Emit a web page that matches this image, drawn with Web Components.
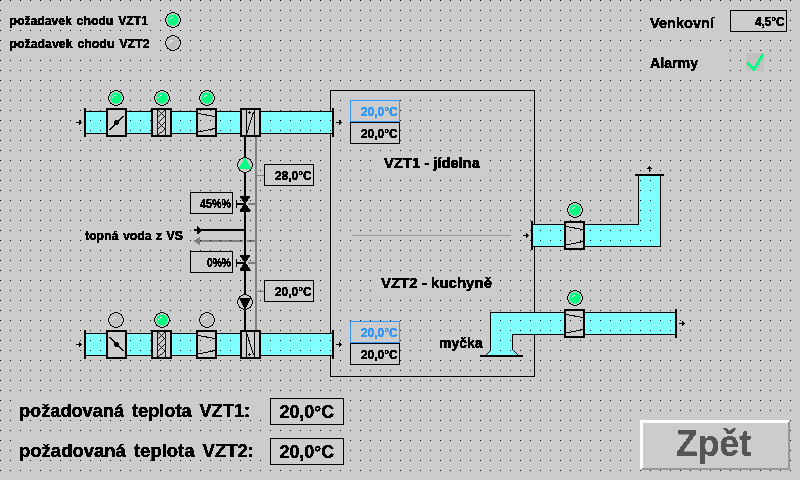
<!DOCTYPE html>
<html lang="cs">
<head>
<meta charset="utf-8">
<title>VZT</title>
<style>
html,body{margin:0;padding:0;background:#ccc}
body{width:800px;height:480px;overflow:hidden;font-family:"Liberation Sans",Arial,sans-serif}
</style>
</head>
<body>
<hmi-screen></hmi-screen>
<script>
// Base for items on the free canvas: x / y / w / h attributes set the box.
class HmiItem extends HTMLElement {
  num(n, d = 0) { return this.hasAttribute(n) ? +this.getAttribute(n) : d; }
  size() { return [this.num('w', 20), this.num('h', 20)]; }
  connectedCallback() {
    if (this.shadowRoot) return;
    const [w, h] = this.size();
    this.attachShadow({ mode: 'open' }).innerHTML =
      `<style>:host{position:absolute;display:block;left:${this.num('x')}px;top:${this.num('y')}px;width:${w}px;height:${h}px;box-sizing:border-box}
       svg{display:block;overflow:visible;shape-rendering:crispEdges}
       text{font-family:"Liberation Sans",Arial,sans-serif;font-weight:bold;white-space:pre}</style>` + this.view(w, h);
  }
}
const CRISP = `<filter id="crisp" x="-10%" y="-30%" width="120%" height="160%" color-interpolation-filters="sRGB"><feComponentTransfer><feFuncA type="linear" slope="12" intercept="-5"/></feComponentTransfer></filter>`;
const words = (t, x, y, len, size, color = '#000', gap = 0) =>
  `<text x="${x}" y="${y}" textLength="${len}" lengthAdjust="spacingAndGlyphs" font-size="${size}" fill="${color}" stroke="${color}" stroke-width="${size < 20 ? 0.35 : 0.2}" style="word-spacing:${gap}px" filter="url(#crisp)">${t}</text>`;

// Caption with an opaque plate; tx / base / len / size place the words.
customElements.define('hmi-label', class extends HmiItem {
  view(w, h) {
    return `<style>:host{background:#ccc}</style><svg width="${w}" height="${h}">${CRISP}${words(this.getAttribute('text'), this.num('tx') - this.num('x'), this.num('base') - this.num('y'), this.num('len'), this.num('size'), '#000', this.num('gap'))}</svg>`;
  }
});
// Framed numeric reading
customElements.define('hmi-value', class extends HmiItem {
  size() { return [this.num('w', 50), this.num('h', 22)]; }
  view(w, h) {
    const c = this.getAttribute('color') || '#000', len = this.num('len', 36.5);
    return `<svg width="${w}" height="${h}">${CRISP}<rect x=".5" y=".5" width="${w - 1}" height="${h - 1}" fill="#ccc" stroke="${c}"/>${words(this.getAttribute('text'), w - this.num('pad', 2.5) - len, this.num('base', 16), len, this.num('size', 12.5), c)}</svg>`;
  }
});
customElements.define('hmi-lamp', class extends HmiItem {
  size() { return [16, 16]; }
  view() {
    const on = this.hasAttribute('on');
    return `<svg width="16" height="16"><circle cx="8" cy="8" r="7.4" fill="#ccc" stroke="#000" stroke-width="1.1"/>
      <circle cx="8" cy="8" r="5.9" fill="${on ? '#00ff80' : '#c0c0c0'}" stroke="${on ? '#b8c8be' : '#c8c8c8'}" stroke-width=".6"/>
      <path d="M4 7.5h1M5 6.5h1M6 5.5h2" stroke="#fff"/></svg>`;
  }
});
customElements.define('hmi-arrow', class extends HmiItem {
  size() { return [6, 5]; }
  view() {
    return `<svg width="6" height="5"><g ${this.hasAttribute('up') ? 'transform="rotate(-90) translate(-6 0)"' : ''}><path d="M0 2h6v1H0zM3 0h1v5H3zM4 1h1v3H4z"/></g></svg>`;
  }
});
// Air-handling unit sections, all in the same 21 x 29 casing
class HmiUnit extends HmiItem {
  size() { return [21, 29]; }
  view() {
    return `<svg width="21" height="29"><rect x="1" y="1" width="19" height="27" fill="#ccc" stroke="#000" stroke-width="2"/>${this.inside()}</svg>`;
  }
}
customElements.define('hmi-damper', class extends HmiUnit {
  inside() {
    const closed = this.hasAttribute('closed');
    return `<g ${closed ? 'transform="matrix(1 0 0 -1 0 29)"' : ''}><path d="M3.5 22 17.5 8" stroke="#000" stroke-width="1.3"/><path d="M8 13h1v-1h3v1h1v3h-1v1H9v-1H8z"/></g>`;
  }
});
customElements.define('hmi-filter', class extends HmiUnit {
  inside() { return `<path d="M6.5 2V27M14.5 2V27M7 2.5 14 8.5 7 14.5 14 21 7 27M14 2.5 7 8.5M7 21 14 14.5" fill="none" stroke="#000" stroke-width=".9"/>`; }
});
customElements.define('hmi-fan', class extends HmiUnit {
  inside() { return `<path d="M2 5.5 19 8.5M2 24 19 20.5" stroke="#000"/>`; }
});
customElements.define('hmi-coil', class extends HmiUnit {
  inside() {
    return `<g ${this.hasAttribute('flip') ? 'transform="matrix(1 0 0 -1 0 29)"' : ''}><path d="M6.5 2V27M14.5 2V27M6.5 26.5 13.5 4M8 4.5h3M9.5 3v3" fill="none" stroke="#000"/></g>`;
  }
});
customElements.define('hmi-pump', class extends HmiItem {
  size() { return [16, 16]; }
  view() {
    return `<svg width="16" height="16"><circle cx="8" cy="8" r="7.4" fill="#ccc" stroke="#000"/>${this.hasAttribute('on')
      ? '<path d="M8 0.5 14.5 12H1.5z" fill="#00ff80"/>' : '<path d="M8 15.5 14 4H2z"/>'}</svg>`;
  }
});
customElements.define('hmi-valve', class extends HmiItem {
  size() { return [20, 16]; }
  view() {
    return `<svg width="20" height="16"><path d="M12 7h8v2h-8z" fill="#808080"/><path d="M4 0h10v2h-1v1h-1v2h-1v1h-1v3h1v1h1v2h1v1h1v3H4v-3h1v-1h1v-2h1V9H1v3H0V4h1v3h7V6H7V5H6V3H5V2H4z"/></svg>`;
  }
});
// Ducts, room outline, water pipes, in screen coordinates
customElements.define('hmi-ducts', class extends HmiItem {
  view(w, h) {
    const main = y => `<rect x="86" y="${y}" width="246" height="23" fill="#80ffff"/><path d="M86 ${y + .5}H332M86 ${y + 22.5}H332" stroke="#000"/><path d="M85 ${y - 3}v29M333 ${y - 3}v29" stroke="#000" stroke-width="2"/>`;
    return `<svg width="${w}" height="${h}" fill="none" stroke="none">
      <rect x="330.5" y="90.5" width="204" height="286" stroke="#000"/>
      <path d="M352 235.5H511" stroke="#999"/>
      ${main(111)}${main(333)}
      <path d="M533 224.5H638.5V176H660.5V246.5H533z" fill="#80ffff"/>
      <path d="M533 224.5H638.5V176M660.5 176V246.5H533" stroke="#000"/>
      <path d="M532 221v29M635 175h29" stroke="#000" stroke-width="2"/>
      <path d="M675 312.5H490.5V350.5L485.5 355.5H518.5L512.5 349.5V334.5H675z" fill="#80ffff"/>
      <path d="M675 312.5H490.5V350.5L485.5 355.5M518.5 355.5 512.5 349.5V334.5H675" stroke="#000"/>
      <path d="M676 309v29M480 356h43" stroke="#000" stroke-width="2"/>
      <path d="M256 137V330M194 241H256" stroke="#808080" stroke-width="2"/>
      <path d="M257 175.5h7M257 291.5h7" stroke="#808080"/>
      <path d="M243 239h4v4h-4z" fill="#ccc"/>
      <path d="M245 137V330M194 230H245" stroke="#000" stroke-width="2"/>
      <path d="M197 226h1v1h1v1h1v1h1v1h1v1h-1v1h-1v1h-1v1h-2z" fill="#000"/>
      <path d="M200 237h-1v1h-2v1h-1v1h-2v2h2v1h1v1h2v1h1z" fill="#808080"/>
    </svg>`;
  }
});
customElements.define('hmi-dots', class extends HmiItem {
  view(w, h) { return `<svg width="${w}" height="${h}"><pattern id="grid" width="10" height="10" patternUnits="userSpaceOnUse"><rect width="1" height="1"/></pattern><rect width="${w}" height="${h}" fill="url(#grid)"/></svg>`; }
});
customElements.define('hmi-check', class extends HmiItem {
  size() { return [18, 18]; }
  view() { return `<svg width="18" height="18"><rect width="18" height="18" fill="#c0c0c0"/><path d="M1 10 8 16.5 17 1.5" fill="none" stroke="#00ff80" stroke-width="2.8"/></svg>`; }
});
customElements.define('hmi-button', class extends HmiItem {
  view(w, h) {
    return `<svg width="${w}" height="${h}">${CRISP}<rect width="${w}" height="${h}" fill="#999"/><path d="M0 0H${w}L${w - 2} 2V${h - 2}H2L0 ${h}z" fill="#fff"/><rect x="3" y="3" width="${w - 5}" height="${h - 5}" fill="#ccc"/>${words(this.getAttribute('text'), 36, 36, 75, 36, '#555')}</svg>`;
  }
});
customElements.define('hmi-screen', class extends HTMLElement {
  constructor() {
    super();
    const line = (y, a, b) => `<hmi-damper x="106" y="${y}" ${a}></hmi-damper><hmi-filter x="151" y="${y}"></hmi-filter><hmi-coil x="240" y="${y}" ${b}></hmi-coil>`;
    this.attachShadow({ mode: 'open' }).innerHTML = `
<style>:host{position:relative;display:block;width:800px;height:480px;background:#ccc;overflow:hidden}</style>
<hmi-ducts w="800" h="480"></hmi-ducts>
<hmi-fan x="196" y="108"></hmi-fan><hmi-fan x="196" y="330"></hmi-fan>
<hmi-fan x="564" y="221"></hmi-fan><hmi-fan x="564" y="309"></hmi-fan>
<hmi-dots w="800" h="480"></hmi-dots>
${line(108, '', '')}${line(330, 'closed', 'flip')}
<hmi-arrow x="76" y="120"></hmi-arrow><hmi-arrow x="336" y="120"></hmi-arrow>
<hmi-arrow x="76" y="342"></hmi-arrow><hmi-arrow x="336" y="342"></hmi-arrow>
<hmi-arrow x="523" y="233"></hmi-arrow><hmi-arrow x="679" y="321"></hmi-arrow>
<hmi-arrow x="647" y="166" up></hmi-arrow>
<hmi-lamp x="165" y="12" on></hmi-lamp><hmi-lamp x="165" y="35"></hmi-lamp>
<hmi-lamp x="108" y="90" on></hmi-lamp><hmi-lamp x="154" y="90" on></hmi-lamp><hmi-lamp x="199" y="90" on></hmi-lamp>
<hmi-lamp x="108" y="312"></hmi-lamp><hmi-lamp x="154" y="312" on></hmi-lamp><hmi-lamp x="199" y="312"></hmi-lamp>
<hmi-lamp x="567" y="202" on></hmi-lamp><hmi-lamp x="567" y="290" on></hmi-lamp>
<hmi-pump x="237" y="157" on></hmi-pump><hmi-pump x="237" y="294"></hmi-pump>
<hmi-valve x="236" y="196"></hmi-valve><hmi-valve x="236" y="255"></hmi-valve>
<hmi-label x="8" y="8" w="150" h="21" tx="9.5" base="25" len="138.5" size="12" gap="1.5" text="požadavek chodu VZT1"></hmi-label>
<hmi-label x="8" y="32" w="150" h="22" tx="9.5" base="48" len="140" size="12" gap="1.5" text="požadavek chodu VZT2"></hmi-label>
<hmi-label x="643" y="9" w="85" h="25" tx="650" base="28" len="64" size="14" text="Venkovní"></hmi-label>
<hmi-label x="643" y="48" w="84" h="27" tx="650" base="68" len="48" size="14" text="Alarmy"></hmi-label>
<hmi-label x="375" y="153" w="112" h="25" tx="384" base="168" len="96" size="14.5" text="VZT1 - jídelna"></hmi-label>
<hmi-label x="376" y="273" w="122" h="25" tx="381" base="288" len="111" size="14.5" text="VZT2 - kuchyně"></hmi-label>
<hmi-label x="437" y="333" w="46" h="20" tx="439" base="348" len="43.5" size="14.5" text="myčka"></hmi-label>
<hmi-label x="83" y="228" w="104" h="20" tx="85" base="240" len="98" size="12" gap="1" text="topná voda z VS"></hmi-label>
<hmi-label x="18" y="398" w="248" h="21" tx="19" base="417" len="231" size="19" gap="3" text="požadovaná teplota VZT1:"></hmi-label>
<hmi-label x="18" y="438" w="248" h="21" tx="19" base="457" len="235" size="19" gap="3" text="požadovaná teplota VZT2:"></hmi-label>
<hmi-value x="730" y="10" w="57" len="29.5" text="4,5°C"></hmi-value>
<hmi-value x="264" y="164" text="28,0°C"></hmi-value>
<hmi-value x="264" y="280" text="20,0°C"></hmi-value>
<hmi-value x="190" y="192" w="43" len="31" pad="2" text="45%%"></hmi-value>
<hmi-value x="190" y="251" w="43" len="24" pad="2" text="0%%"></hmi-value>
<hmi-value x="350" y="100" color="#3399ff" text="20,0°C"></hmi-value>
<hmi-value x="350" y="122" text="20,0°C"></hmi-value>
<hmi-value x="350" y="321" color="#3399ff" text="20,0°C"></hmi-value>
<hmi-value x="350" y="343" text="20,0°C"></hmi-value>
<hmi-value x="270" y="398" w="74" h="27" len="54.5" pad="10" base="20" size="19" text="20,0°C"></hmi-value>
<hmi-value x="270" y="438" w="74" h="27" len="54.5" pad="10" base="20" size="19" text="20,0°C"></hmi-value>
<hmi-check x="746" y="53"></hmi-check>
<hmi-button x="640" y="420" w="150" h="50" text="Zpět"></hmi-button>`;
  }
});
</script>
</body>
</html>
